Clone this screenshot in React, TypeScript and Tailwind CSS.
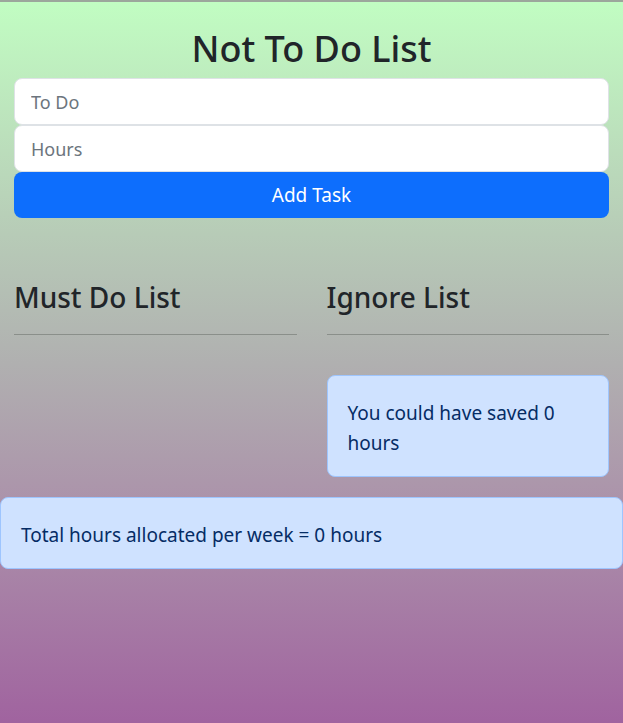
import React from 'react';

const App: React.FC = () => {
  return (
    <div
      className="min-h-[723px] w-full border-t-2 border-[#9ca79c] bg-gradient-to-b from-[#c1fdc2] via-[#b0b0b0] to-[#a0639f] text-[#212529] font-['Noto_Sans',sans-serif]"
    >
      <div className="px-[14px]">
        {/* Header + form */}
        <h1 className="pt-[24px] pb-[6px] text-center text-[36px] font-medium leading-[46px]">
          Not To Do List
        </h1>
        <form className="flex flex-col" onSubmit={(e) => e.preventDefault()}>
          <input
            placeholder="To Do"
            className="h-[47px] w-full rounded-lg border border-[#dee2e6] bg-white px-4 text-[18px] placeholder:text-[#6c757d] outline-none"
          />
          <input
            placeholder="Hours"
            type="number"
            className="h-[47px] w-full rounded-lg border border-[#dee2e6] bg-white px-4 text-[18px] placeholder:text-[#6c757d] outline-none"
          />
          <button className="h-[46px] w-full rounded-lg bg-[#0d6efd] text-[19px] text-white">
            Add Task
          </button>
        </form>

        {/* Lists */}
        <div className="mt-[61px] grid grid-cols-2 gap-[30px]">
          <div>
            <h2 className="text-[28px] font-medium leading-[36px]">Must Do List</h2>
            <hr className="mt-[19px] border-t border-[#8a8f8a]" />
          </div>
          <div>
            <h2 className="text-[28px] font-medium leading-[36px]">Ignore List</h2>
            <hr className="mt-[19px] border-t border-[#8a8f8a]" />
            <div className="mt-[40px] rounded-lg border border-[#9ec5fe] bg-[#cfe2ff] px-[20px] pt-[22px] pb-[18px] text-[19px] leading-[30px] text-[#052c65]">
              You could have saved 0 hours
            </div>
          </div>
        </div>
      </div>

      <div className="mt-[20px] rounded-lg border border-[#9ec5fe] bg-[#cfe2ff] px-[20px] pt-[22px] pb-[18px] text-[19px] leading-[30px] text-[#052c65]">
        Total hours allocated per week = 0 hours
      </div>
    </div>
  );
};

export default App;
